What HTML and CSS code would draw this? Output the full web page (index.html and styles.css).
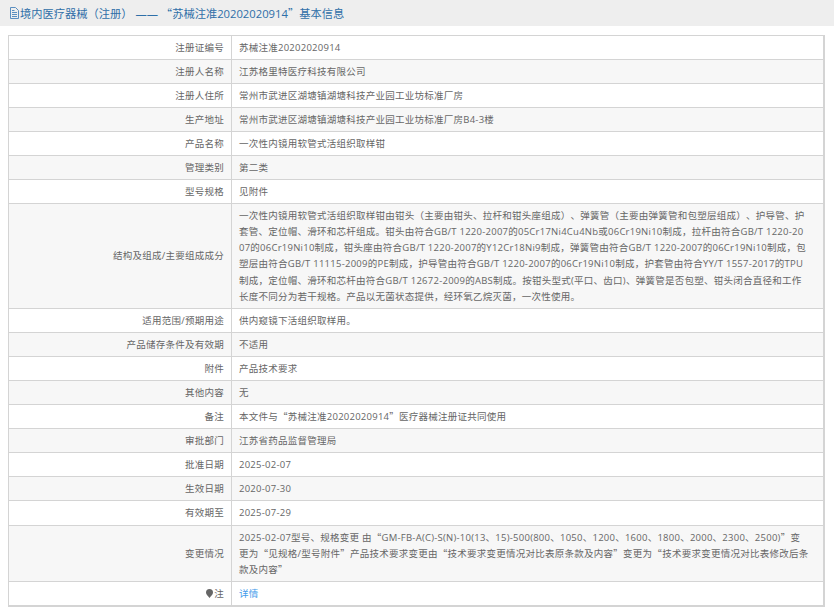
FILE: index.html
```html
<!DOCTYPE html>
<html lang="zh-CN">
<head>
    <meta charset="UTF-8">
    <title>基本信息</title>
    <link rel="stylesheet" href="styles.css">
</head>
<body>
    <div class="title-bar">
        <svg class="doc-icon" width="10" height="12" viewBox="0 0 10 12">
            <path d="M1.500 .5h5l3 3v8h-8z M3 3.500h2.500 M3 5.500h5 M3 7.500h5 M3 9.500h5" fill="none" stroke="#5b8fc0" stroke-width="1"/>
        </svg>
        <span>境内医疗器械（注册） —— <span class="q">“</span>苏械注准20202020914<span class="q">”</span>基本信息</span>
    </div>

    <table class="info-table">
        <tr><th>注册证编号</th><td>苏械注准20202020914</td></tr>
        <tr><th>注册人名称</th><td>江苏格里特医疗科技有限公司</td></tr>
        <tr><th>注册人住所</th><td>常州市武进区湖塘镇湖塘科技产业园工业坊标准厂房</td></tr>
        <tr><th>生产地址</th><td>常州市武进区湖塘镇湖塘科技产业园工业坊标准厂房B4-3楼</td></tr>
        <tr><th>产品名称</th><td>一次性内镜用软管式活组织取样钳</td></tr>
        <tr><th>管理类别</th><td>第二类</td></tr>
        <tr><th>型号规格</th><td>见附件</td></tr>
        <tr><th>结构及组成/主要组成成分</th><td>一次性内镜用软管式活组织取样钳由钳头（主要由钳头、拉杆和钳头座组成）、弹簧管（主要由弹簧管和包塑层组成）、护导管、护<br>套管、定位帽、滑环和芯杆组成。钳头由符合GB/T 1220-2007的05Cr17Ni4Cu4Nb或06Cr19Ni10制成，拉杆由符合GB/T 1220-20<br>07的06Cr19Ni10制成，钳头座由符合GB/T 1220-2007的Y12Cr18Ni9制成，弹簧管由符合GB/T 1220-2007的06Cr19Ni10制成，包<br>塑层由符合GB/T 11115-2009的PE制成，护导管由符合GB/T 1220-2007的06Cr19Ni10制成，护套管由符合YY/T 1557-2017的TPU<br>制成，定位帽、滑环和芯杆由符合GB/T 12672-2009的ABS制成。按钳头型式(平口、齿口)、弹簧管是否包塑、钳头闭合直径和工作<br>长度不同分为若干规格。产品以无菌状态提供，经环氧乙烷灭菌，一次性使用。</td></tr>
        <tr><th>适用范围/预期用途</th><td>供内窥镜下活组织取样用。</td></tr>
        <tr><th>产品储存条件及有效期</th><td>不适用</td></tr>
        <tr><th>附件</th><td>产品技术要求</td></tr>
        <tr><th>其他内容</th><td>无</td></tr>
        <tr><th>备注</th><td>本文件与<span class="q">“</span>苏械注准20202020914<span class="q">”</span>医疗器械注册证共同使用</td></tr>
        <tr><th>审批部门</th><td>江苏省药品监督管理局</td></tr>
        <tr><th>批准日期</th><td>2025-02-07</td></tr>
        <tr><th>生效日期</th><td>2020-07-30</td></tr>
        <tr><th>有效期至</th><td>2025-07-29</td></tr>
        <tr><th>变更情况</th><td>2025-02-07型号、规格变更 由<span class="q">“</span>GM-FB-A(C)-S(N)-10(13、15)-500(800、1050、1200、1600、1800、2000、2300、2500)<span class="q">”</span>变<br>更为<span class="q">“</span>见规格/型号附件<span class="q">”</span>产品技术要求变更由<span class="q">“</span>技术要求变更情况对比表原条款及内容<span class="q">”</span>变更为<span class="q">“</span>技术要求变更情况对比表修改后条<br>款及内容<span class="q">”</span></td></tr>
        <tr>
            <th>
                <svg class="pin" width="7" height="9" viewBox="0 0 7 9"><path d="M3.500 0a3.500 3.500 0 0 1 3.500 3.500c0 2-2 3.500-3.500 5.500c-1.500-2-3.500-3.500-3.500-5.500a3.500 3.500 0 0 1 3.500-3.500z" fill="#666"/></svg>注
            </th>
            <td><a href="#">详情</a></td>
        </tr>
    </table>
</body>
</html>
```

FILE: styles.css
```css
body {
    margin: 0;
    font-family: "Open Sans", "Noto Sans CJK SC", sans-serif;
    font-size: 9.5px;
    letter-spacing: .25px;
    color: #666;
    background: #fff;
    text-spacing-trim: space-all;
}

.title-bar {
    display: flex;
    align-items: center;
    gap: 1px;
    height: 26px;
    padding-left: 9px;
    background: #eee;
    color: #2f6fa8;
    font-size: 11.25px;
    letter-spacing: 0;
}

.doc-icon {
    flex: none;
}

/* Open Sans quotes are narrow, the CJK ones take a full em */
.q {
    font-family: "Noto Sans CJK SC", sans-serif;
    line-height: 0;
}

.info-table {
    width: 817px;
    margin: 8.5px 0 0 8px;
    border-collapse: collapse;
    table-layout: fixed;
    border-right: 2px solid #d4d4d4;
    border-bottom: 2px solid #d4d4d4;
    word-break: break-all;
}

.info-table th,
.info-table td {
    border: 1px solid #d4d4d4;
    padding: 4px 7px 3px;
    line-height: 16.1px;
    font-weight: normal;
}

.info-table th {
    width: 208px;
    text-align: right;
}

.info-table tr:nth-child(even) {
    background: #f7f7f7;
}

.info-table a {
    color: #3f9bea;
    text-decoration: none;
}

.pin {
    margin-right: 1px;
    vertical-align: -1px;
}
```
